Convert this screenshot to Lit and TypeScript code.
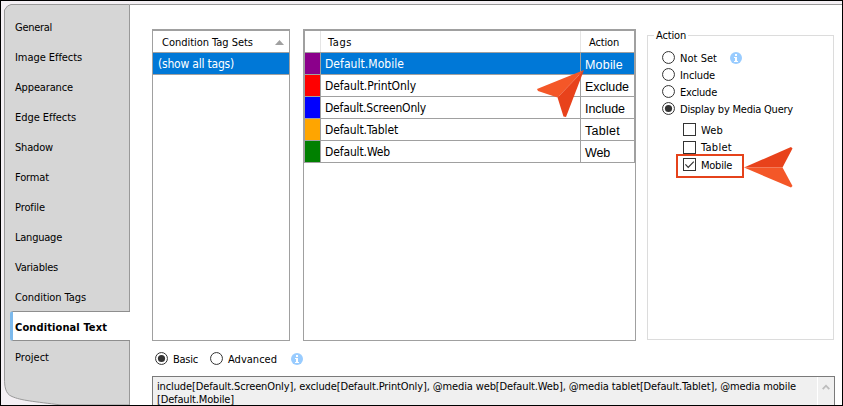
import { LitElement, html, css, svg } from "lit";
import { customElement, property, state } from "lit/decorators.js";
import { classMap } from "lit/directives/class-map.js";
import { styleMap } from "lit/directives/style-map.js";

/** Single-line label tracked so that it fills a given width. */
@customElement("ui-label")
class UiLabel extends LitElement {
  static styles = css`
    :host { display: inline-block; white-space: pre; }
    span { display: inline-block; }
  `;
  @property() text = "";
  @property({ type: Number }) w = 0;
  @state() private spacing = 0;

  firstUpdated() {
    const span = this.renderRoot.querySelector("span")!;
    if (this.w) this.spacing = (this.w - span.getBoundingClientRect().width) / this.text.length;
  }
  render() {
    return html`<span style=${styleMap({ letterSpacing: this.spacing + "px" })}>${this.text}</span>`;
  }
}

@customElement("ui-info")
class UiInfo extends LitElement {
  static styles = css`:host, svg { display: block; width: 12px; height: 12px; }`;
  render() {
    return html`<svg viewBox="0 0 12 12"><circle cx="6" cy="6" r="6" fill="#99ccff" />
      <path d="M5 2h2v2H5zM4 5h3v4h1v1H4V9h1V6H4z" fill="#fff" /></svg>`;
  }
}

@customElement("ui-radio")
class UiRadio extends LitElement {
  static styles = css`:host, svg { display: block; width: 13px; height: 13px; flex: none; }`;
  @property({ type: Boolean }) on = false;
  render() {
    return html`<svg viewBox="0 0 13 13"><circle cx="6.5" cy="6.5" r="5.95" fill="#fff" stroke="#333" stroke-width="1" />
      ${this.on ? svg`<circle cx="6.5" cy="6.5" r="3.6" fill="#333" />` : ""}</svg>`;
  }
}

@customElement("ui-check")
class UiCheck extends LitElement {
  static styles = css`:host, svg { display: block; width: 13px; height: 13px; flex: none; }`;
  @property({ type: Boolean }) on = false;
  render() {
    return html`<svg viewBox="0 0 13 13"><rect x=".5" y=".5" width="12" height="12" fill="#fff" stroke="#333" />
      ${this.on ? svg`<path d="M2.4 6.4l2.8 2.9 5.6-5.7" fill="none" stroke="#333" stroke-width="1.2" />` : ""}</svg>`;
  }
}

const NAV: [string, number][] = [
  ["General", 37], ["Image Effects", 67], ["Appearance", 58], ["Edge Effects", 61],
  ["Shadow", 38], ["Format", 34], ["Profile", 30], ["Language", 47],
  ["Variables", 43], ["Condition Tags", 71], ["Conditional Text", 92], ["Project", 34],
];
const TAGS: [string, string, number, string, number][] = [
  ["#8b008b", "Default.Mobile", 79, "Mobile", 38],
  ["#ff0000", "Default.PrintOnly", 91, "Exclude", 44],
  ["#0000ff", "Default.ScreenOnly", 101, "Include", 40],
  ["#ffa500", "Default.Tablet", 73, "Tablet", 35],
  ["#008000", "Default.Web", 65, "Web", 25],
];
const MODES: [string, number][] = [["Not Set", 37], ["Include", 35], ["Exclude", 37], ["Display by Media Query", 113]];
const MEDIA: [string, number][] = [["Web", 22], ["Tablet", 31], ["Mobile", 31]];

@customElement("app-root")
class AppRoot extends LitElement {
  static styles = css`
    :host {
      display: block; position: relative; box-sizing: border-box;
      width: 843px; height: 406px; overflow: hidden;
      border: 1px solid #000; background: #f4f0f4; color: #000;
      font: 11px/14px "DejaVu Sans Condensed", "DejaVu Sans", sans-serif;
      font-stretch: condensed;
    }
    * { box-sizing: border-box; }
    .window { display: grid; grid-template-columns: 126px 1fr; height: 404px; padding: 3px 0 0 3px; }
    .side { position: relative; height: 401px; }
    .outline { position: absolute; inset: 0; width: 126px; height: 401px; }
    nav { position: relative; display: flex; flex-direction: column; padding: 8px 0 0 6px; }
    .item { height: 30px; padding: 9px 0 0 5px; }
    .item.current {
      font-weight: bold; background: #fff; padding: 9px 0 0 2px;
      border: solid #8e8e8e; border-width: 1px 0; border-radius: 3px 0 0 3px;
      border-left: 3px solid #7cb9ec; margin-top: -1px; margin-bottom: 1px;
    }
    main { background: #fff; border-top: 1px solid #999; padding: 24px 8px 0 22px; overflow: hidden; }
    .panes { display: grid; grid-template-columns: 138px 333px 187px; column-gap: 13px; height: 312px; }
    .pane { border: 1px solid #a0a0a0; border-top-width: 2px; height: 312px; }
    .inner { border: solid #a0a0a0; border-width: 0 1px; }
    .row { display: grid; height: 22px; border-bottom: 1px solid #a0a0a0; }
    .tags .row { grid-template-columns: 16px 260px 1fr; }
    .cell { padding: 4px 0 0 4px; border-right: 1px solid #a0a0a0; height: 21px; font-size: 12px; }
    .row.sel > .cell:only-child { padding-left: 5px; }
    .cell.swatch { padding: 0; }
    .cell:last-child { border-right: 0; }
    .tags .cell:last-child { padding-top: 5px; font-family: "Liberation Sans", sans-serif; font-size: 12.5px; }
    .sel { background: #0078d7; color: #fff; }
    .row.head .cell, .tags .row.head .cell { font: inherit; border-color: #e5e5e5; padding: 5px 0 0 8px; }
    .tags .row.head .cell:nth-child(2) { padding-left: 7px; }
    .row.head.sets { display: flex; justify-content: space-between; padding-right: 5px; }
    .row.head.sets .cell { border: 0; padding-left: 9px; }
    .sort { width: 9px; height: 5px; margin-top: 9px; background: #a0a0a0; clip-path: polygon(50% 0, 100% 100%, 0 100%); }
    .group { position: relative; margin: 6px 0 0 -2px; width: 187px; height: 305px; border: 1px solid #dcdcdc; padding: 13px 0 0 14px; }
    .legend { position: absolute; left: 6px; top: -7px; background: #fff; padding: 0 2px; height: 15px; }
    .opt { display: flex; gap: 5px; height: 17px; align-items: center; }
    .opt ui-label { position: relative; top: 1px; }
    .opt ui-info { margin-left: 8px; }
    .media { padding: 4px 0 0 21px; }
    .media .opt { height: 17.5px; }
    .ring { position: absolute; left: 28px; top: 118px; width: 68px; height: 24px; border: 2px solid #e5421b; }
    .modes { display: flex; align-items: center; height: 15px; margin: 10px 0 0 3px; }
    .modes ui-label { margin-left: 5px; position: relative; top: 1px; }
    .gap { width: 12px; }
    .modes ui-info { margin-left: 2px; }
    .query { display: flex; margin-top: 10px; width: 683px; height: 40px; border: 1px solid #7a7a7a; background: #f0f0f0; }
    .lines { flex: 1; padding: 3px 0 0 4px; line-height: 13px; }
    .lines ui-label { display: block; }
    .scroll { width: 17px; border-left: 1px solid #fff; padding: 7px 0 0 4px; }
    .scroll svg { display: block; }
    .arrow { position: absolute; overflow: visible; }
    .a1 { left: 536px; top: 69px; }
    .a2 { left: 743px; top: 146px; }
  `;

  render() {
    return html`
      <div class="window">
        <div class="side">
          <svg class="outline" viewBox="0 0 126 401">
            <path d="M125.5 .5H7L3.5 2 .5 6V375C.5 381 1 390 8 392.5C17 396.5 30 397.5 57 401H125.5Z" fill="#d6d6d6" stroke="#999" />
          </svg>
          <nav>${NAV.map(([t, w]) => html`<div class=${classMap({ item: true, current: t === "Conditional Text" })}>
            <ui-label .text=${t} .w=${w}></ui-label></div>`)}</nav>
        </div>
        <main>
          <div class="panes">
            <div class="pane">
              <div class="row head sets"><div class="cell"><ui-label text="Condition Tag Sets" .w=${91}></ui-label></div><div class="sort"></div></div>
              <div class="row sel"><div class="cell"><ui-label text="(show all tags)" .w=${76}></ui-label></div></div>
            </div>
            <div class="pane tags">
              <div class="inner">
                <div class="row head"><div class="cell"></div>
                  <div class="cell"><ui-label text="Tags" .w=${24}></ui-label></div>
                  <div class="cell"><ui-label text="Action" .w=${30}></ui-label></div></div>
                ${TAGS.map(([color, name, w, action, aw], i) => html`<div class=${classMap({ row: true, sel: i === 0 })}>
                  <div class="cell swatch" style=${styleMap({ backgroundColor: color })}></div>
                  <div class="cell"><ui-label .text=${name} .w=${w}></ui-label></div>
                  <div class="cell"><ui-label .text=${action} .w=${aw}></ui-label></div></div>`)}
              </div>
            </div>
            <div class="group">
              <div class="legend"><ui-label text="Action" .w=${30}></ui-label></div>
              ${MODES.map(([t, w], i) => html`<div class="opt"><ui-radio ?on=${i === 3}></ui-radio>
                <ui-label .text=${t} .w=${w}></ui-label>${i === 0 ? html`<ui-info></ui-info>` : ""}</div>`)}
              <div class="media">${MEDIA.map(([t, w], i) => html`<div class="opt"><ui-check ?on=${i === 2}></ui-check>
                <ui-label .text=${t} .w=${w}></ui-label></div>`)}</div>
              <div class="ring"></div>
            </div>
          </div>
          <div class="modes">
            <ui-radio on></ui-radio><ui-label text="Basic" .w=${25}></ui-label><span class="gap"></span>
            <ui-radio></ui-radio><ui-label text="Advanced" .w=${49}></ui-label><span class="gap"></span>
            <ui-info></ui-info>
          </div>
          <div class="query">
            <div class="lines">
              <ui-label text="include[Default.ScreenOnly], exclude[Default.PrintOnly], @media web[Default.Web], @media tablet[Default.Tablet], @media mobile" .w=${639}></ui-label>
              <ui-label text="[Default.Mobile]" .w=${77}></ui-label>
            </div>
            <div class="scroll"><svg width="8" height="6" viewBox="0 0 8 6"><path d="M.7 5.2L4 1.7l3.3 3.5" fill="none" stroke="#bdbdbd" stroke-width="1.8" /></svg></div>
          </div>
        </main>
      </div>
      <svg class="arrow a1" width="48" height="48" viewBox="0 0 48 48">
        <path d="M47 0L0 19L1 21L20.5 27.5Z" fill="#f45728" /><path d="M47 0L20.5 27.5L26.5 46.5L29 47Z" fill="#e8421b" />
      </svg>
      <svg class="arrow a2" width="49" height="41" viewBox="0 0 49 41">
        <path d="M0 20.5L47 0L48.5 1.5L38.5 20.5Z" fill="#e8421b" /><path d="M0 20.5H38.5L48.5 39L47 40.5Z" fill="#f45728" />
      </svg>`;
  }
}
